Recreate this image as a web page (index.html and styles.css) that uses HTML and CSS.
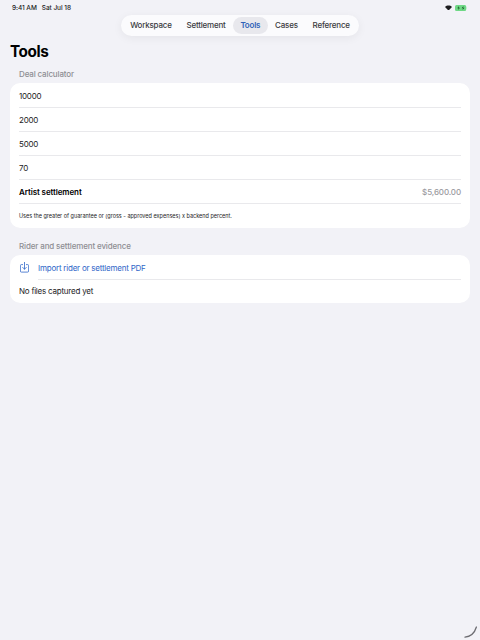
FILE: index.html
```html
<!DOCTYPE html>
<html lang="en">
<head>
<meta charset="utf-8">
<title>Tools</title>
<link rel="stylesheet" href="styles.css">
</head>
<body>
<div class="status">
  <div class="status-left"><span>9:41 AM</span><span>Sat Jul 18</span></div>
  <div class="status-right">
    <svg class="wifi" viewBox="0 0 10 8" width="7" height="5.6"><path d="M5 8 L0 2.8 C2.8 .1 7.2 .1 10 2.8 Z" fill="#1c1c1e"/></svg>
    <svg class="battery" viewBox="0 0 14 6" width="12.5" height="6" preserveAspectRatio="none"><rect x="0" y="0" width="12.5" height="6" rx="1.6" fill="#6fd886"/><rect x="13" y="2" width="1" height="2" fill="#a5e3b3"/><path d="M4.5 1 L2.5 3.2 H4 L3.4 5 L5.6 2.7 H4.1 Z" fill="#14501f"/><path d="M9.5 1 L7.5 3.2 H9 L8.4 5 L10.6 2.7 H9.1 Z" fill="#14501f"/></svg>
  </div>
</div>
<div class="nav-wrap">
  <nav class="nav">
    <span class="tab">Workspace</span>
    <span class="tab">Settlement</span>
    <span class="tab active">Tools</span>
    <span class="tab">Cases</span>
    <span class="tab">Reference</span>
  </nav>
</div>
<main class="main">
  <h1 class="title">Tools</h1>
  <h2 class="section-head">Deal calculator</h2>
  <section class="card">
    <div class="row">10000</div>
    <div class="row">2000</div>
    <div class="row">5000</div>
    <div class="row">70</div>
    <div class="row result"><strong>Artist settlement</strong><span class="amount">$5,600.00</span></div>
    <div class="row note">Uses the greater of guarantee or (gross - approved expenses) x backend percent.</div>
  </section>
  <h2 class="section-head second">Rider and settlement evidence</h2>
  <section class="card">
    <div class="row import">
      <svg class="import-icon" viewBox="0 0 9 10.5" width="9" height="10.5" fill="none" stroke="#2f66c8" stroke-width=".8" stroke-linecap="round" stroke-linejoin="round"><path d="M2.6 2.6 H1.4 A1 1 0 0 0 .4 3.6 V9.1 A1 1 0 0 0 1.4 10.1 H7.6 A1 1 0 0 0 8.6 9.1 V3.6 A1 1 0 0 0 7.6 2.6 H6.4"/><path d="M4.5 .4 V7.2 M2.7 5.4 L4.5 7.2 L6.3 5.4"/></svg>
      <span class="import-text">Import rider or settlement PDF</span>
    </div>
    <div class="row last-row">No files captured yet</div>
  </section>
</main>
<svg class="grip" viewBox="0 0 14 12" width="14" height="12" fill="none"><path d="M1 11.2 C6 10.6 10.6 7 12.4 1" stroke="#6d6d72" stroke-width="1.3" stroke-linecap="round"/></svg>
</body>
</html>
```

FILE: styles.css
```css
* { box-sizing: border-box; }
html, body { margin: 0; height: 100%; }
body {
  background: #f2f2f7;
  color: #000;
  font-family: Inter, "Liberation Sans", sans-serif;
  font-size: 8px;
  letter-spacing: -.22px;
  overflow: hidden;
  position: relative;
}
.status {
  display: flex;
  justify-content: space-between;
  align-items: center;
  height: 15px;
  padding: 0 13px 0 12px;
}
.status-left {
  display: flex;
  gap: 5px;
  font-size: 6.5px;
  letter-spacing: -.05px;
  font-weight: 500;
  color: #1c1c1e;
}
.status-right { display: flex; align-items: center; gap: 3px; }
.wifi, .battery { display: block; }
.nav-wrap { display: flex; justify-content: center; }
.nav {
  display: flex;
  align-items: center;
  height: 21px;
  padding: 0 2px;
  background: #fbfbfd;
  border-radius: 11px;
  box-shadow: 0 2px 10px rgba(0, 0, 0, .06);
}
.tab {
  padding: 0 7.4px;
  height: 17px;
  line-height: 17px;
  font-size: 8px;
  letter-spacing: -.2px;
  font-weight: 500;
  color: #3a3a3e;
  border-radius: 9px;
}
.tab.active {
  background: #e8e8ed;
  color: #2f62b8;
  font-weight: 600;
}
.main { padding: 0 10px; }
.title {
  margin: 6px 0 0;
  font-size: 15.3px;
  letter-spacing: -.4px;
  line-height: 20px;
  font-weight: 700;
}
.section-head {
  margin: 6px 0 0;
  padding-left: 9px;
  height: 15px;
  line-height: 12px;
  font-size: 8px;
  letter-spacing: -.14px;
  font-weight: 500;
  color: #8e8e93;
}
.section-head.second { margin-top: 10px; height: 17px; line-height: 17px; }
.card {
  background: #fff;
  border-radius: 10px;
  padding: 1px 9px 0;
  box-shadow: 0 0 1px rgba(0, 0, 0, .02);
}
.row {
  display: flex;
  align-items: center;
  height: 24px;
  border-bottom: .5px solid #e9e9ec;
  color: #1c1c1e;
}
.row:last-child { border-bottom: 0; height: 23px; }
.result { justify-content: space-between; }
.result strong { font-weight: 600; color: #000; letter-spacing: -.1px; }
.amount { color: #9a9aa0; font-weight: 500; letter-spacing: -.1px; }
.note, .row.note { font-size: 5.5px; letter-spacing: 0; height: 24px; color: #1c1c1e; }
.import { gap: 9px; padding: 0 0 1px 1px; border-bottom: 0; position: relative; }
.import::after {
  content: "";
  position: absolute;
  left: 19px;
  right: 0;
  bottom: 0;
  border-bottom: .5px solid #e9e9ec;
}
.import-icon { display: block; flex: none; }
.import-text { color: #2f66c8; }
.last-row { padding-bottom: 1px; }
.grip { position: absolute; right: 2px; bottom: 2px; }
```
